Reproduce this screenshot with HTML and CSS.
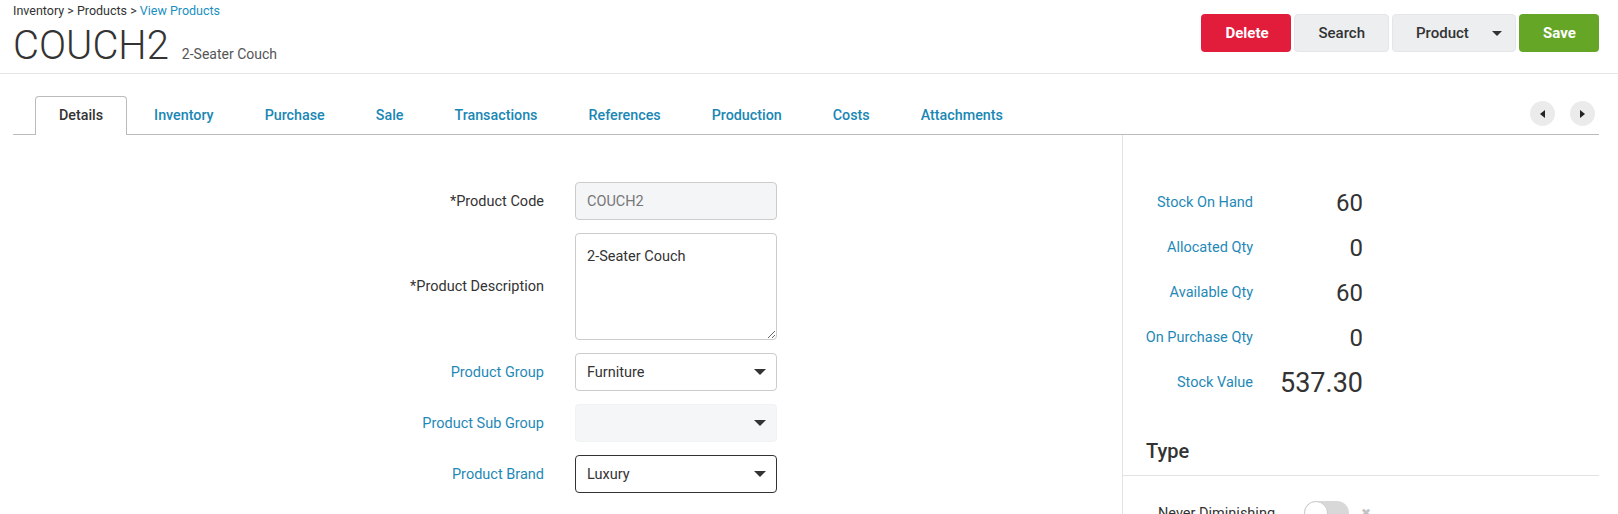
FILE: index.html
```html
<!DOCTYPE html>
<html lang="en">
<head>
  <meta charset="UTF-8" />
  <title>COUCH2 - View Product</title>
  <link rel="stylesheet" href="styles.css">
</head>
<body>
  <div class="page-header">
    <div class="title-block">
      <div class="breadcrumb">Inventory &gt; Products &gt; <a href="#">View Products</a></div>
      <div class="title-row">
        <h1>COUCH2</h1>
        <span class="subtitle">2-Seater Couch</span>
      </div>
    </div>
    <div class="actions">
      <button class="btn btn-danger">Delete</button>
      <button class="btn btn-light">Search</button>
      <button class="btn btn-light btn-dropdown">Product <span class="caret"></span></button>
      <button class="btn btn-success">Save</button>
    </div>
  </div>

  <div class="content">
    <div class="tab-bar">
      <ul class="tabs">
        <li class="active">Details</li>
        <li>Inventory</li>
        <li>Purchase</li>
        <li>Sale</li>
        <li>Transactions</li>
        <li>References</li>
        <li>Production</li>
        <li>Costs</li>
        <li>Attachments</li>
      </ul>
      <div class="tab-nav">
        <button class="nav-btn prev"></button>
        <button class="nav-btn next"></button>
      </div>
    </div>

    <div class="panels">
      <div class="form-panel">
        <div class="form-grid">
          <label class="required">*Product Code</label>
          <input class="field" type="text" value="COUCH2" disabled>

          <label class="required">*Product Description</label>
          <textarea class="field field-area">2-Seater Couch</textarea>

          <label>Product Group</label>
          <div class="select-wrap">
            <select class="field">
              <option>Furniture</option>
            </select>
          </div>

          <label>Product Sub Group</label>
          <div class="select-wrap">
            <select class="field field-empty">
              <option></option>
            </select>
          </div>

          <label>Product Brand</label>
          <div class="select-wrap">
            <select class="field field-focus">
              <option>Luxury</option>
            </select>
          </div>
        </div>
      </div>

      <div class="side-panel">
        <div class="stats">
          <span class="stat-label">Stock On Hand</span>
          <span class="stat-value">60</span>
          <span class="stat-label">Allocated Qty</span>
          <span class="stat-value">0</span>
          <span class="stat-label">Available Qty</span>
          <span class="stat-value">60</span>
          <span class="stat-label">On Purchase Qty</span>
          <span class="stat-value">0</span>
          <span class="stat-label">Stock Value</span>
          <span class="stat-value big">537.30</span>
        </div>

        <h2 class="section-title">Type</h2>
        <div class="switch-row">
          <span class="switch-label">Never Diminishing</span>
          <span class="switch"><span class="knob"></span></span>
          <span class="switch-x">&#10006;</span>
        </div>
      </div>
    </div>
  </div>
</body>
</html>
```

FILE: styles.css
```css
html, body {
  margin: 0;
  padding: 0;
  overflow: hidden;
}

body {
  font-family: Roboto, "Liberation Sans", Arial, sans-serif;
  font-size: 14.5px;
  color: #333;
  background: #fff;
}

/* header */

.page-header {
  display: flex;
  justify-content: space-between;
  align-items: flex-start;
  padding: 3px 19px 6px 13px;
  border-bottom: 1px solid #e6e6e6;
}

.breadcrumb {
  font-size: 12.5px;
  line-height: 16px;
}

.breadcrumb a {
  color: #1a8fc0;
  text-decoration: none;
}

.title-row {
  display: flex;
  align-items: baseline;
  margin-top: 6px;
}

.title-row h1 {
  margin: 0;
  font-size: 40px;
  font-weight: 300;
  line-height: 42px;
  color: #333;
}

.subtitle {
  margin-left: 13px;
  font-size: 14px;
  color: #555;
}

.actions {
  display: flex;
  gap: 3px;
  margin-top: 11px;
}

.btn {
  height: 38px;
  padding: 0 23px;
  border: 1px solid transparent;
  border-radius: 4px;
  font-family: inherit;
  font-size: 15px;
  font-weight: 500;
  cursor: pointer;
}

.btn-danger {
  background: #e21d3c;
  color: #fff;
  font-weight: 700;
  width: 90px;
}

.btn-success {
  background: #65a626;
  color: #fff;
  font-weight: 700;
  width: 80px;
}

.btn-light {
  background: #eceef0;
  border-color: #e4e6e9;
  color: #333;
}

.btn-dropdown {
  width: 124px;
  padding: 0 13px 0 23px;
  text-align: left;
  display: flex;
  align-items: center;
  justify-content: space-between;
}

.caret {
  width: 0;
  height: 0;
  border-left: 5px solid transparent;
  border-right: 5px solid transparent;
  border-top: 5px solid #333;
}

/* tabs */

.content {
  margin: 0 19px 0 13px;
}

.tab-bar {
  display: flex;
  justify-content: space-between;
  align-items: flex-end;
  margin-top: 22px;
  border-bottom: 1px solid #bbb;
}

.tabs {
  display: flex;
  list-style: none;
  margin: 0 0 -1px 22px;
  padding: 0;
}

.tabs li {
  height: 37px;
  line-height: 37px;
  padding: 0 23px;
  margin-right: 3px;
  border: 1px solid transparent;
  border-bottom: none;
  font-size: 14.3px;
  font-weight: 500;
  color: #1a87b4;
  cursor: pointer;
}

.tabs li.active {
  color: #333;
  background: #fff;
  border-color: #bbb;
  border-radius: 4px 4px 0 0;
  height: 38px;
}

.tab-nav {
  display: flex;
  gap: 15px;
  margin: 0 4px 8px 0;
}

.nav-btn {
  width: 25px;
  height: 25px;
  border: none;
  border-radius: 50%;
  background: #ebebeb;
  padding: 0;
  display: flex;
  align-items: center;
  justify-content: center;
  cursor: pointer;
}

.nav-btn::before {
  content: "";
  width: 0;
  height: 0;
  border-top: 4px solid transparent;
  border-bottom: 4px solid transparent;
}

.nav-btn.prev::before {
  border-right: 5px solid #222;
}

.nav-btn.next::before {
  border-left: 5px solid #222;
}

/* body panels */

.panels {
  display: flex;
  height: 400px;
}

.form-panel {
  flex: 1;
  padding-top: 47px;
}

.form-grid {
  display: grid;
  grid-template-columns: 531px 202px;
  column-gap: 31px;
  row-gap: 13px;
  align-items: center;
}

.form-grid label {
  text-align: right;
  color: #1f89b6;
}

.form-grid label.required {
  color: #333;
}

.field {
  box-sizing: border-box;
  width: 202px;
  height: 38px;
  padding: 0 11px;
  border: 1px solid #ccc;
  border-radius: 4px;
  font-family: inherit;
  font-size: 14.5px;
  color: #333;
  background: #fff;
}

.field:disabled {
  background: #f4f5f7;
  color: #777;
}

.field-area {
  height: 107px;
  padding: 13px 11px 10px;
  line-height: 20px;
  resize: vertical;
}

.select-wrap {
  position: relative;
  width: 202px;
}

.select-wrap select {
  appearance: none;
  -webkit-appearance: none;
}

.select-wrap::after {
  content: "";
  position: absolute;
  right: 11px;
  top: 16px;
  border-left: 6px solid transparent;
  border-right: 6px solid transparent;
  border-top: 6px solid #333;
  pointer-events: none;
}

.field-empty {
  background: #f5f6f8;
  border-color: #f1f2f4;
}

.field-focus {
  border-color: #333;
}

.side-panel {
  width: 476px;
  border-left: 1px solid #e3e3e3;
}

.stats {
  display: grid;
  grid-template-columns: 110px 110px;
  grid-auto-rows: 45px;
  align-items: center;
  margin: 45px 0 0 20px;
}

.stat-label {
  text-align: right;
  white-space: nowrap;
  color: #1f89b6;
}

.stat-value {
  text-align: right;
  font-size: 24px;
  color: #333;
}

.stat-value.big {
  font-size: 27px;
}

.section-title {
  margin: 34px 0 0 0;
  padding: 0 0 12px 23px;
  font-size: 20px;
  font-weight: 500;
  line-height: 24px;
  border-bottom: 1px solid #e3e3e3;
}

.switch-row {
  display: flex;
  align-items: center;
  padding: 25px 0 0 35px;
}

.switch-label {
  width: 146px;
}

.switch {
  position: relative;
  width: 45px;
  height: 24px;
  border-radius: 12px;
  background: #d8d8d8;
}

.knob {
  position: absolute;
  left: 0;
  top: 0;
  width: 22px;
  height: 22px;
  border-radius: 50%;
  background: #fff;
  border: 1px solid #ccc;
}

.switch-x {
  margin-left: 12px;
  font-size: 12px;
  color: #c2c2c2;
}
```
